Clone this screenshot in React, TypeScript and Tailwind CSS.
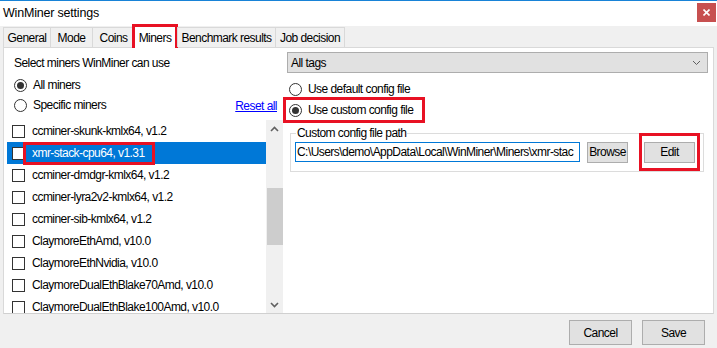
import React from "react";

const miners = [
  "ccminer-skunk-kmlx64, v1.2",
  "xmr-stack-cpu64, v1.31",
  "ccminer-dmdgr-kmlx64, v1.2",
  "ccminer-lyra2v2-kmlx64, v1.2",
  "ccminer-sib-kmlx64, v1.2",
  "ClaymoreEthAmd, v10.0",
  "ClaymoreEthNvidia, v10.0",
  "ClaymoreDualEthBlake70Amd, v10.0",
  "ClaymoreDualEthBlake100Amd, v10.0",
];

function Radio({ checked }: { checked?: boolean }) {
  return (
    <span className="w-[13px] h-[13px] rounded-full border border-[#333333] bg-white flex items-center justify-center shrink-0">
      {checked && <span className="w-[7px] h-[7px] rounded-full bg-[#333333]" />}
    </span>
  );
}

function Check() {
  return <span className="w-[13px] h-[13px] border border-[#333333] bg-white shrink-0" />;
}

const tabs: { t: string; w: string }[] = [
  { t: "General", w: "w-[48px]" },
  { t: "Mode", w: "w-[43px]" },
  { t: "Coins", w: "w-[43px]" },
  { t: "Miners", w: "" },
  { t: "Benchmark results", w: "w-[99px]" },
  { t: "Job decision", w: "w-[70px]" },
];

export default function App() {
  return (
    <div
      className="w-[717px] h-[348px] bg-[#f0f0f0] border-t border-[#1883d7] flex flex-col text-[12px] tracking-[-0.55px] text-black overflow-hidden"
      style={{ fontFamily: '"Liberation Sans", Arial, sans-serif' }}
    >
      {/* title bar */}
      <div className="h-[25px] bg-white flex items-start justify-between">
        <span className="pl-[3px] pt-[5px] text-[12.5px] tracking-[-0.2px] leading-[15px]">WinMiner settings</span>
        <div className="mt-[2px] mr-[1px] w-[19px] h-[19px] bg-[#c75050] flex items-center justify-center">
          <svg width="7" height="7" viewBox="0 0 7 7">
            <path d="M0.5 0.5 L6.5 6.5 M6.5 0.5 L0.5 6.5" stroke="white" strokeWidth="1.6" />
          </svg>
        </div>
      </div>
      {/* tabs */}
      <div className="h-[21px] flex items-end pl-[3px] relative z-10">
        {tabs.map(({ t, w }) => {
          const sel = t === "Miners";
          if (sel) {
            return (
              <div key={t} className="-ml-[2px] -mr-[1px] w-[46px] h-[24px] -mb-[1px] bg-white flex items-center justify-center border-[3px] border-[#e81123] border-b-0">
                <span>{t}</span>
              </div>
            );
          }
          return (
            <div key={t} className={w + " h-[20px] flex items-center justify-center bg-[#f0f0f0] border border-[#d9d9d9] border-b-0 -mr-[1px]"}>
              {t}
            </div>
          );
        })}
      </div>
      {/* tab page */}
      <div className="mx-[3px] h-[267px] bg-white border border-[#d9d9d9] border-b-[#d0d0d0] flex">
        {/* left */}
        <div className="w-[279px] flex flex-col">
          <div className="pl-[10px] pt-[8px] h-[27px] leading-[14px]">Select miners WinMiner can use</div>
          <div className="pl-[10px] flex items-center gap-[6px] h-[20px]">
            <Radio checked />
            <span>All miners</span>
          </div>
          <div className="pl-[10px] flex items-center h-[20px]">
            <Radio />
            <span className="ml-[6px]">Specific miners</span>
            <span className="ml-auto mr-[6px] mt-[2px] text-[#0000ff] underline">Reset all</span>
          </div>
          <div className="flex-1 flex mt-[5px] min-h-0">
            <div className="flex-1 pl-[3px] overflow-hidden">
              {miners.map((m, i) => {
                const sel = i === 1;
                return (
                  <div
                    key={m}
                    className={
                      "h-[22px] flex items-center pl-[5px] relative " + (sel ? "bg-[#0078d7]" : "")
                    }
                  >
                    <Check />
                    {sel ? (
                      <span className="ml-[-2px] pl-[6px] pr-[7px] h-[23px] flex items-center border-[3px] border-[#e81123] text-white">
                        {m}
                      </span>
                    ) : (
                      <span className="ml-[7px]">{m}</span>
                    )}
                  </div>
                );
              })}
            </div>
            <div className="w-[17px] bg-[#f0f0f0] flex flex-col items-center">
              <div className="h-[17px] flex items-center justify-center">
                <svg width="9" height="6" viewBox="0 0 9 6">
                  <path d="M1 5 L4.5 1.5 L8 5" stroke="#606060" strokeWidth="1.6" fill="none" />
                </svg>
              </div>
              <div className="h-[51px]" />
              <div className="w-[16px] h-[57px] bg-[#cdcdcd]" />
              <div className="flex-1" />
              <div className="h-[17px] flex items-center justify-center">
                <svg width="9" height="6" viewBox="0 0 9 6">
                  <path d="M1 1 L4.5 4.5 L8 1" stroke="#606060" strokeWidth="1.6" fill="none" />
                </svg>
              </div>
            </div>
          </div>
        </div>
        {/* right */}
        <div className="flex-1 flex flex-col pl-[4px] pr-[5px] pt-[4px]">
          <div className="h-[21px] bg-[#e1e1e1] border border-[#adadad] flex items-center justify-between pl-[3px] pr-[6px]">
            <span>All tags</span>
            <svg width="9" height="6" viewBox="0 0 9 6">
              <path d="M1 1 L4.5 4.5 L8 1" stroke="#606060" strokeWidth="1" fill="none" />
            </svg>
          </div>
          <div className="mt-[6px] pl-[2px] flex items-center gap-[6px] h-[20px]">
            <Radio />
            <span>Use default config file</span>
          </div>
          <div className="-mt-[2px] -ml-[4px] w-[142px] h-[26px] border-[3px] border-[#e81123] flex items-center gap-[6px] pl-[3px] whitespace-nowrap">
            <Radio checked />
            <span>Use custom config file</span>
          </div>
          <div className="mt-[10px] ml-[3px] mr-[4px] relative border border-[#dcdcdc] h-[39px]">
            <span className="absolute -top-[9px] left-[5px] px-[1px] bg-white leading-[16px]">Custom config file path</span>
            <div className="flex items-center h-[20px] mt-[8px] pl-[4px]">
              <div className="w-[285px] h-[20px] shrink-0 border border-[#0078d7] flex items-center pl-[1px] overflow-hidden whitespace-nowrap">
                C:\Users\demo\AppData\Local\WinMiner\Miners\xmr-stac
              </div>
              <div className="ml-[7px] w-[41px] h-[21px] shrink-0 bg-[#e1e1e1] border border-[#adadad] flex items-center justify-center">
                Browse
              </div>
              <div className="ml-[11px] w-[61px] h-[38px] shrink-0 border-[3px] border-[#e81123] flex items-center justify-center">
                <div className="w-[51px] h-[21px] bg-[#e1e1e1] border border-[#adadad] flex items-center justify-center">
                  Edit
                </div>
              </div>
            </div>
          </div>
        </div>
      </div>
      {/* bottom */}
      <div className="flex justify-end gap-[10px] pr-[12px] pt-[6px]">
        <div className="w-[63px] h-[25px] bg-[#e1e1e1] border border-[#adadad] flex items-center justify-center">Cancel</div>
        <div className="w-[63px] h-[25px] bg-[#e1e1e1] border border-[#adadad] flex items-center justify-center">Save</div>
      </div>
    </div>
  );
}
